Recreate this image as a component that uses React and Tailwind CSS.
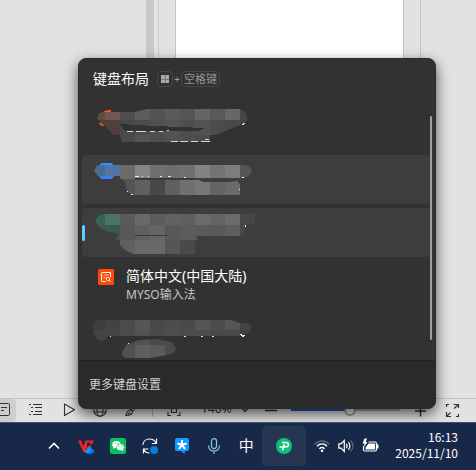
import React from "react";

const LATIN = "font-['Noto_Sans','Noto_Sans_CJK_SC',sans-serif]";

/* ---------- redacted labels ---------- */

function Cells({ rows }) {
  return rows.map(([y, h, x0, colors]) =>
    colors.map((c, i) => (
      <rect key={`${y}-${i}`} x={x0 + i * 15} y={y} width="15" height={h} fill={c} />
    ))
  );
}

function Redacted({ id, y, shapes, rows, under, children }) {
  return (
    <svg className="h-[49px] w-[180px]" viewBox={`82 ${y} 180 49`} shapeRendering="crispEdges" aria-hidden="true">
      <defs>
        <clipPath id={id}>
          {shapes.map((p) => (
            <path key={p} d={p} />
          ))}
        </clipPath>
      </defs>
      {under}
      <g clipPath={`url(#${id})`}>
        <Cells rows={rows} />
      </g>
      {children}
    </svg>
  );
}

const first = (
  <Redacted
    id="r1"
    y={102}
    shapes={["M97 118 99 113 104 112H135L147 109H240L245 112 248 118 244 124 235 127 216 135H210V142H122L120 135H114L106 127 98 120Z"]}
    rows={[
      [105, 15, 90, ["#604c46", "#73564d", "#4e4e4e", "#5d5d5d", "#545454", "#5a5a5a", "#555", "#646464", "#595959", "#676767", "#474747"]],
      [120, 15, 90, ["#54413b", "#4f403b", "#484848", "#4c4c4c", "#505050", "#545454", "#4e4e4e", "#525252", "#4c4c4c", "#494949", "#444"]],
      [135, 15, 120, ["#4a4a4a", "#545454", "#4e4e4e", "#525252", "#4e4e4e", "#4b4b4b"]],
    ]}
    under={<path d="M104 111 107 110H111V112H104ZM99 123H102L104 126H101Z" fill="#f05323" />}
  >
    <path d="M120 124 155 126 205 128 199 131H125Z" fill="#323232" />
    <path d="M127 131.5H133M136 131.5H146M150 131.5H155M159 131.5H163M167 130.5H169M171 141.5H178M180 141.5H188M191 141.5H198M201 141.5H210M205 139.5H209M242 124.5H244M243 123.5H245" stroke="#d6d6d6" />
  </Redacted>
);

const second = (
  <Redacted
    id="r2"
    y={155}
    shapes={["M94 171 96 166 100 165H245L250 167 252 171 249 176 243 178H135V180H199L203 182H230L237 181 240 184V195H131L127 191 125 182 120 178V176H98Z"]}
    rows={[
      [163, 16, 90, ["#486991", "#5275a4", "#6a6a6a", "#848484", "#707070", "#6d6d6d", "#707070", "#828282", "#747474", "#7d7d7d", "#565656"]],
      [179, 18, 120, ["#545454", "#606060", "#484848", "#606060", "#707070", "#777", "#646464", "#6a6a6a"]],
    ]}
    under={
      <>
        <path d="M101 163H112L114 166V176L111 179H101L98 176V166Z" fill="#318fff" />
        <path d="M98 173H114V176L111 179H101L98 176Z" fill="#3a7cf7" />
      </>
    }
  >
    <path d="M135 178.5H195" stroke="#363636" />
    <path d="M135 176.5H139M142 176.5H143M148 176.5H149M160 176.5H162M168 176.5H171M184 177.5H186M242 177.5H244M127 191.5H128M131 194.5H133M239 189.5H240" stroke="#e8e8e8" />
  </Redacted>
);

const third = (
  <Redacted
    id="r3"
    y={208}
    shapes={["M95 221 98 216 104 214H255V224H246L244 234 241 236H196L198 240H195V254H133L125 250 120 245V240H115L118 236V233L108 232 99 227Z"]}
    rows={[
      [210, 15, 90, ["#386552", "#4a7362", "#5b5b5b", "#696969", "#5c5c5c", "#626262", "#5f5f5f", "#6b6b6b", "#636363", "#6b6b6b", "#474747"]],
      [225, 15, 90, ["#3f594e", "#385b4c", "#585858", "#606060", "#656565", "#585858", "#5c5c5c", "#5a5a5a", "#595959", "#5e5e5e", "#494949"]],
      [240, 15, 120, ["#606060", "#696969", "#696969", "#565656", "#4a4a4a"]],
    ]}
  >
    <path d="M135 235.5H167" stroke="#3a3a3a" />
    <path d="M245.5 225V227" stroke="#eee" />
  </Redacted>
);

const fifth = (
  <Redacted
    id="r5"
    y={314}
    shapes={[
      "M92 325 95 321 102 320H231L240 323 249 323 252 328 248 333 238 336H108L105 340H98L94 334Z",
      "M122 352 127 344 140 340 157 339 171 342 176 348 174 353 162 356 150 358H125L122 355Z",
    ]}
    rows={[
      [315, 15, 90, ["#3e3e3e", "#434343", "#4b4b4b", "#565656", "#494949", "#4d4d4d", "#4a4a4a", "#565656", "#4d4d4d", "#565656", "#434343"]],
      [330, 15, 90, ["#444", "#454545", "#4b4b4b", "#525252", "#4a4a4a", "#4e4e4e", "#4b4b4b", "#4d4d4d", "#494949", "#4a4a4a", "#404040"]],
      [345, 15, 120, ["#505050", "#5d5f5e", "#5a5c5b", "#4c4c4c"]],
    ]}
  >
    <path d="M110 336.5H111M128 343.5H129M184 336.5H186M201 336.5H203M212 336.5H214M240 334.5H242M241 335.5H245M242 336.5H244" stroke="#e6e6e6" />
  </Redacted>
);

/* ---------- language menu ---------- */

function Row({ label, tone = "", active, children }) {
  return (
    <li>
      <button
        type="button"
        aria-label={label}
        className={`relative flex h-[49px] w-full items-center overflow-hidden rounded text-left ${tone}`}
      >
        {active && <span className="absolute left-0 h-4 w-[3px] rounded-full bg-[#60cdff]" />}
        {children}
      </button>
    </li>
  );
}

function LayoutMenu() {
  return (
    <section
      className={`absolute right-10 bottom-[13px] left-[78px] z-10 overflow-hidden rounded-lg border border-[#2b2b2b] bg-[#323232] shadow-[0_5px_14px_rgba(0,0,0,0.65)] ${LATIN}`}
    >
      <header className="flex h-[43px] items-center px-3.5 pb-1 text-white">
        <h1 className="text-sm leading-5">键盘布局</h1>
        <kbd className="ml-2 flex size-4 items-center justify-center rounded-sm border border-[#464646]">
          <svg className="size-2" viewBox="0 0 8 8" shapeRendering="crispEdges" aria-hidden="true">
            <path d="M0 0H8V8H0Z" fill="#a8a8a8" />
            <path d="M4 0V8M0 4H8" stroke="#777" strokeWidth="1" />
          </svg>
        </kbd>
        <span className="w-2 text-center text-[10px] leading-4 text-[#a0a0a0]">+</span>
        <kbd className={`flex h-4 items-center rounded-sm border border-[#464646] px-0.5 text-[11px] leading-4 text-[#959595] ${LATIN}`}>
          空格键
        </kbd>
      </header>
      <div className="relative h-[258px] overflow-hidden">
        <ul className="flex flex-col gap-1 pr-[5px] pl-[3px]">
          <Row label="1">{first}</Row>
          <Row label="2" tone="bg-[#3d3d3d]">{second}</Row>
          <Row label="3" tone="bg-[#3d3d3d]" active>{third}</Row>
          <Row>
            <svg className="mr-3 mb-[18px] ml-4 size-4 shrink-0" viewBox="0 0 16 16" fill="none" aria-hidden="true">
              <rect width="16" height="16" rx="1.5" fill="#fb4b0b" />
              <path d="M7.5 12.5H4.5C3.8 12.5 3.5 12 3.5 11.500V4.500C3.500 3.800 4 3.500 4.500 3.500H12.500V8" stroke="#fff" />
              <path d="M5.500 6H10.500M5.500 8.500H7.500" stroke="#ffc0a5" />
              <circle cx="10" cy="10" r="1.700" stroke="#ffe1d5" />
              <path d="M11.300 11.300 13 13" stroke="#ffe1d5" />
            </svg>
            <span className="flex flex-col pb-0.5 text-white">
              <span className="text-sm leading-5">简体中文(中国大陆)</span>
              <span className="text-xs leading-[18px] text-[#c6c6c6]">MYSO输入法</span>
            </span>
          </Row>
          <Row label="5">{fifth}</Row>
        </ul>
        <span className="absolute top-3.5 right-[3px] h-56 w-0.5 rounded-full bg-[#9f9f9f]" />
      </div>
      <footer className="border-t border-[#222] bg-[#2a2a2a]">
        <button type="button" className="flex h-[47px] w-full items-center px-2.5 text-xs text-[#d2d2d2]">
          更多键盘设置
        </button>
      </footer>
    </section>
  );
}

/* ---------- editor behind the menu ---------- */

function Tool({ label, width = "w-8", children }) {
  return (
    <button type="button" aria-label={label} className={`flex h-full shrink-0 items-center justify-center pb-0.5 ${width}`}>
      {children}
    </button>
  );
}

function Glyph({ children }) {
  return (
    <svg className="size-4" viewBox="0 0 16 16" fill="none" stroke="#333" strokeWidth="1.1" aria-hidden="true">
      {children}
    </svg>
  );
}

function StatusBar() {
  return (
    <div className={`flex h-6 items-center border-t border-[#c3c3c3] bg-[#e2e2e2] text-[#333] ${LATIN}`}>
      <button type="button" aria-label="Page view" className="mr-1 flex h-full w-4 shrink-0 items-center justify-end rounded-r bg-[#cdcdcd] pr-1.5 pb-0.5">
        <svg className="h-4 w-2.5" viewBox="0 0 10 16" fill="none" stroke="#333" aria-hidden="true">
          <path d="M0 1.500H8.500C9.200 1.500 9.500 2 9.500 2.500V12.500C9.500 13.200 9 13.500 8.500 13.500H0M1 5.500H7M1 8.500H4" />
        </svg>
      </button>
      <Tool label="Outline">
        <Glyph>
          <path d="M1 2.500H3M5 2.500H14M3 5.500H5M7 5.500H14M3 9.500H5M7 9.500H14M1 12.500H3M5 12.500H14" />
        </Glyph>
      </Tool>
      <Tool label="Play">
        <Glyph>
          <path d="M4.500 2V13.500L14.500 7.700Z" strokeLinejoin="round" />
        </Glyph>
      </Tool>
      <Tool label="Web view">
        <Glyph>
          <circle cx="8" cy="8" r="6.300" />
          <ellipse cx="8" cy="8" rx="3" ry="6.300" />
          <path d="M2 6H14M2 10H14" />
        </Glyph>
      </Tool>
      <Tool label="Ink">
        <Glyph>
          <path d="M13 2 6.500 8M8.500 9.500 14 3M6.500 8C4 8 3 9.500 2 13.500 6 13.500 8.500 12 8.500 9.500ZM4 12 6 10.500" />
        </Glyph>
      </Tool>
      <span className="ml-1 h-3 w-px bg-[#b5b5b5]" />
      <Tool label="Fit page" width="w-[42px]">
        <Glyph>
          <path d="M2 5V2H5M11 2H14V5M2 10V13.500H5M11 13.500H14V10M5.500 5.500H10.500V10.500H5.500Z" />
        </Glyph>
      </Tool>
      <button type="button" className="ml-1.5 flex h-full w-[54px] shrink-0 items-center gap-2 pb-1 text-xs leading-4">
        140%
        <svg className="size-2.5 shrink-0" viewBox="0 0 10 10" fill="none" stroke="#333" strokeWidth="1.400" aria-hidden="true">
          <path d="M2 4 5 7.500 8 4" />
        </svg>
      </button>
      <Tool label="Zoom out">
        <Glyph>
          <path d="M2 8.500H14" strokeWidth="1.500" />
        </Glyph>
      </Tool>
      <input
        type="range"
        aria-label="Zoom"
        min="0"
        max="100"
        defaultValue="55"
        className="mx-1 mb-0.5 h-3 min-w-0 flex-1 appearance-none bg-[linear-gradient(to_right,#1a5fc4_54%,#a9a9a9_54%)] bg-[length:100%_2px] bg-center bg-no-repeat [&::-webkit-slider-thumb]:size-3 [&::-webkit-slider-thumb]:appearance-none [&::-webkit-slider-thumb]:rounded-full [&::-webkit-slider-thumb]:border-2 [&::-webkit-slider-thumb]:border-[#999] [&::-webkit-slider-thumb]:bg-[#eee]"
      />
      <Tool label="Zoom in">
        <Glyph>
          <path d="M3 9H14M8.500 4V14.500" strokeWidth="1.500" />
        </Glyph>
      </Tool>
      <Tool label="Full screen" width="mr-2 w-8">
        <Glyph>
          <path d="M2.500 5V2.500H5M9.500 2.500H14.500V6M14.500 2.500 10 6.500M2.500 10V14.500H7M2.500 14.500 6.500 10.500M14.500 12V14.500H12" strokeWidth="1.200" />
        </Glyph>
      </Tool>
    </div>
  );
}

function Editor() {
  return (
    <div className="flex flex-1 bg-[#e2e2e2]">
      <div className="w-[146px] shrink-0" />
      <div className="w-2 shrink-0 bg-[#c8c8c8]" />
      <div className="w-[5px] shrink-0 border-r border-[#cfcfcf]" />
      <div className="w-4 shrink-0" />
      <div className="flex-1 border-x border-[#c3c3c3] bg-white" />
      <div className="w-[17px] shrink-0 border-r border-[#c3c3c3]" />
      <div className="w-[55px] shrink-0" />
    </div>
  );
}

/* ---------- taskbar ---------- */

function Tray({ label, width = "w-8", children }) {
  return (
    <button type="button" aria-label={label} className={`flex h-10 shrink-0 items-center justify-center ${width}`}>
      {children}
    </button>
  );
}

function Taskbar() {
  return (
    <footer className="relative z-20 flex h-12 items-center justify-end border-t border-[#45536b] bg-[#172848] pr-[18px] pb-0.5 text-white">
      <Tray label="Hidden icons">
        <svg className="size-4" viewBox="0 0 16 16" fill="none" stroke="#fff" strokeWidth="1.600" aria-hidden="true">
          <path d="M3 10.500 8 5.500 13 10.500" />
        </svg>
      </Tray>
      <Tray label="WPS">
        <svg className="size-4" viewBox="0 0 16 16" aria-hidden="true">
          <path d="M0 2.500H3.200L5.300 8.500 7.500 2.500H16L14.300 6H10.500L9.800 7.500H13.500L12.800 9.500H9L7 14H5.200L3.900 10.800Z" fill="#f5231d" />
          <path d="M4 4.200H6.300L5.300 7ZM9 4.500H12.500L9.300 10.500Z" fill="#172848" />
          <path d="M9 15.500C6.500 15.500 6.300 12 8.800 11.500 9 8 13 7.800 13.600 10.800 16.500 11 16.500 15.500 13.700 15.500Z" fill="#1495f5" />
          <path d="M10 15.500C12 15 13.500 13 13.600 10.800 16.500 11 16.500 15.500 13.700 15.500Z" fill="#0b6ee0" />
        </svg>
      </Tray>
      <Tray label="WeChat">
        <svg className="size-4" viewBox="0 0 16 16" aria-hidden="true">
          <rect width="16" height="16" rx="2.500" fill="#06c160" />
          <ellipse cx="6.500" cy="6.500" rx="4.300" ry="3.600" fill="#fff" />
          <path d="M3.500 8.500 3.200 11 5.500 9.800Z" fill="#fff" />
          <ellipse cx="10.300" cy="9.300" rx="4" ry="3.300" fill="#fff" stroke="#06c160" strokeWidth=".6" />
          <path d="M11 12 13.200 13.200 13 11Z" fill="#fff" />
          <g fill="#06c160">
            <circle cx="5.100" cy="5.500" r=".6" />
            <circle cx="8" cy="5.500" r=".6" />
            <circle cx="9" cy="8.600" r=".5" />
            <circle cx="11.600" cy="8.600" r=".5" />
          </g>
        </svg>
      </Tray>
      <Tray label="Sync">
        <svg className="size-4" viewBox="0 0 16 16" fill="none" stroke="#fff" strokeWidth="1.200" aria-hidden="true">
          <path d="M.8 7C1.200 3.500 4 1 7.500 1 10.500 1 12.800 2.500 14 5M14.500 .5V5.500H9.800M6.500 11H1.500V15.500M1.500 11C2.500 13.500 5 15 7.500 15" />
          <circle cx="12" cy="12" r="4" fill="#0b7be0" stroke="none" />
        </svg>
      </Tray>
      <Tray label="Messenger">
        <svg className="size-4" viewBox="0 0 16 16" aria-hidden="true">
          <path d="M3 0H13C14.500 0 15 1 15 2V11C15 12.500 14 13 13 13H11L10.500 16 7 13H3C1.500 13 1 12 1 11V2C1 .8 1.800 0 3 0Z" fill="#109bff" />
          <path d="M8 2V6.800M8 6.800 3.300 5.500M8 6.800 12.700 5.500M8 6.800 5 11M8 6.800 11 11" stroke="#fff" strokeWidth="2" />
        </svg>
      </Tray>
      <Tray label="Microphone">
        <svg className="size-4" viewBox="0 0 16 16" fill="none" stroke="#86cbe5" strokeWidth="1.200" aria-hidden="true">
          <rect x="5.500" y=".6" width="5" height="10" rx="2.500" />
          <path d="M2.600 7.500C2.600 11 5 13 8 13S13.400 11 13.400 7.500M8 13V16" />
        </svg>
      </Tray>
      <button type="button" className={`h-10 w-8 shrink-0 pb-0.5 text-center text-[15px] leading-[38px] ${LATIN}`}>中</button>
      <button type="button" aria-label="Input method" className="flex h-10 w-11 shrink-0 items-center justify-center rounded bg-[#273650]">
        <svg className="size-4" viewBox="0 0 16 16" fill="none" aria-hidden="true">
          <circle cx="8" cy="8" r="8" fill="#0cc07a" />
          <path d="M6 4.500H10C13.500 4.500 13 9 10 9H3.500M8.300 6.300 6.500 12.500" stroke="#fff" strokeWidth="1.700" />
        </svg>
      </button>
      <button type="button" aria-label="Network, sound and battery" className="flex h-10 shrink-0 items-center gap-2 pr-4 pl-2">
        <svg className="size-4" viewBox="0 0 16 16" fill="none" strokeWidth="1.500" aria-hidden="true">
          <path d="M.8 6.200C5 1.800 11 1.800 15.200 6.200" stroke="#5b6880" />
          <path d="M3 8.300C6 5.300 10 5.300 13 8.300M5.300 10.700C7 9.200 9 9.200 10.700 10.700" stroke="#fff" />
          <circle cx="8" cy="12.800" r="1.300" fill="#fff" />
        </svg>
        <svg className="size-4" viewBox="0 0 16 16" fill="none" stroke="#fff" strokeWidth="1.200" aria-hidden="true">
          <path d="M.8 5.800H3L6.300 2.500V13.500L3 10.200H.8ZM8.300 6C9.300 7.200 9.300 8.800 8.300 10M10.300 4C12.300 6.500 12.300 9.500 10.300 12" />
          <path d="M12.500 2.500C15.800 5.500 15.800 10.500 12.500 13.500" stroke="#5b6880" />
        </svg>
        <svg className="h-4 w-[17px]" viewBox="0 0 17 16" fill="none" aria-hidden="true">
          <path d="M6.500 4H13C14 4 14.500 4.500 14.500 5.500V11.500C14.500 12.500 14 13 13 13H3C2 13 1.500 12.500 1.500 11.500V8" stroke="#fff" strokeWidth="1.200" />
          <path d="M6.500 5.500H13V11.500H3.500V9.500Z" fill="#fff" />
          <path d="M15 6.500H16.500V10.500H15ZM2.500 .5 .5 5.500H2.500L1.500 9.500 5.500 4H3.800L5 .5Z" fill="#fff" />
        </svg>
      </button>
      <button type="button" className="shrink-0 pb-0.5 text-right font-['Noto_Sans_CJK_SC',sans-serif] text-xs leading-4">
        <time className="block">16:13</time>
        <time className="block">2025/11/10</time>
      </button>
    </footer>
  );
}

export default function App() {
  return (
    <div className="flex min-h-screen flex-col overflow-hidden bg-[#e2e2e2]">
      <main className="relative flex flex-1 flex-col">
        <Editor />
        <StatusBar />
        <LayoutMenu />
      </main>
      <Taskbar />
    </div>
  );
}
